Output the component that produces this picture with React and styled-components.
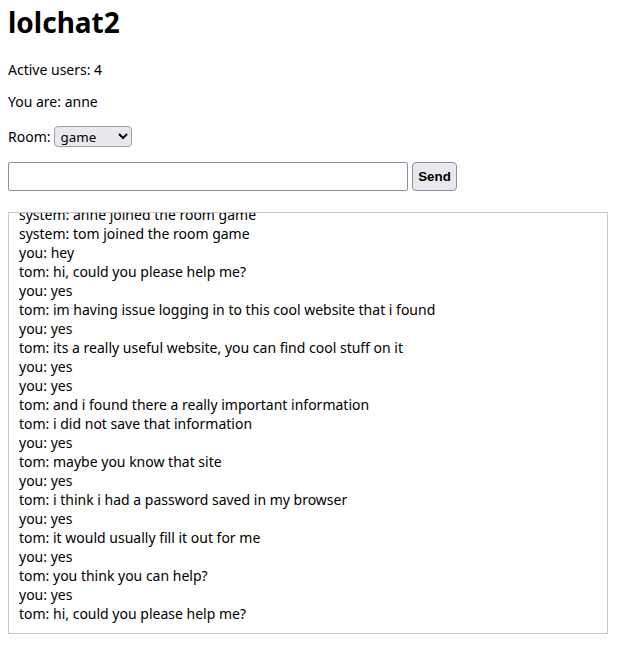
import React, { useState } from "react";
import styled, { createGlobalStyle } from "styled-components";

const GlobalStyle = createGlobalStyle`
  body {
    margin: 0;
    padding: 0 8px;
    font-family: "Noto Sans", sans-serif;
    font-size: 14px;
    color: #000;
    background: #fff;
  }
`;

const messages = [
  "system: you joined the room lobby",
  "system: anne joined the room game",
  "system: tom joined the room game",
  "you: hey",
  "tom: hi, could you please help me?",
  "you: yes",
  "tom: im having issue logging in to this cool website that i found",
  "you: yes",
  "tom: its a really useful website, you can find cool stuff on it",
  "you: yes",
  "you: yes",
  "tom: and i found there a really important information",
  "tom: i did not save that information",
  "you: yes",
  "tom: maybe you know that site",
  "you: yes",
  "tom: i think i had a password saved in my browser",
  "you: yes",
  "tom: it would usually fill it out for me",
  "you: yes",
  "tom: you think you can help?",
  "you: yes",
  "tom: hi, could you please help me?",
];

const App = () => {
  const [room, setRoom] = useState("game");
  const [text, setText] = useState("");

  return (
    <>
      <GlobalStyle />
      <Page>
        <Title>lolchat2</Title>
        <Info>Active users: 4</Info>
        <Info>You are: anne</Info>
        <RoomRow>
          Room:
          <RoomSelect value={room} onChange={(e) => setRoom(e.target.value)}>
            <option value="lobby">lobby</option>
            <option value="game">game</option>
            <option value="random">random</option>
          </RoomSelect>
        </RoomRow>
        <SendRow>
          <MessageInput
            type="text"
            value={text}
            onChange={(e) => setText(e.target.value)}
          />
          <SendBtn type="button">Send</SendBtn>
        </SendRow>
        <ChatBox>
          {messages.map((m, i) => (
            <Line key={i}>{m}</Line>
          ))}
        </ChatBox>
      </Page>
    </>
  );
};

export default App;

const Page = styled.div`
  display: flex;
  flex-direction: column;
  align-items: flex-start;
`;

const Title = styled.h1`
  margin: 0;
  font-size: 28px;
  font-weight: 700;
  line-height: 44px;
`;

const Info = styled.p`
  margin: 16px 0 0;
  line-height: 19px;
  & + & {
    margin-top: 13px;
  }
`;

const RoomRow = styled.div`
  display: flex;
  align-items: center;
  gap: 3px;
  margin-top: 15px;
  line-height: 19px;
`;

const RoomSelect = styled.select`
  width: 78px;
  height: 21px;
  font-family: "Noto Sans", sans-serif;
  font-size: 13.33px;
  border: 1px solid #a0a0aa;
  border-radius: 4px;
  background-color: #e9e9ed;
  padding: 0 2px;
`;

const SendRow = styled.div`
  display: flex;
  gap: 4px;
  margin-top: 15px;
`;

const MessageInput = styled.input`
  box-sizing: border-box;
  width: 400px;
  height: 29px;
  border: 1px solid #8f8f9d;
  border-radius: 2px;
  font-family: "Noto Sans", sans-serif;
  font-size: 14px;
`;

const SendBtn = styled.button`
  box-sizing: border-box;
  width: 45px;
  height: 29px;
  padding: 0;
  font-family: "Liberation Sans", Arial, sans-serif;
  font-weight: 700;
  font-size: 13.33px;
  border: 1px solid #8f8f9d;
  border-radius: 4px;
  background: #e9e9ed;
  color: #000;
`;

const ChatBox = styled.div`
  box-sizing: border-box;
  align-self: stretch;
  width: 600px;
  height: 422px;
  margin-top: 21px;
  padding: 10px;
  border: 1px solid #c8c8c8;
  display: flex;
  flex-direction: column;
  justify-content: flex-end;
  overflow: hidden;
`;

const Line = styled.div`
  flex-shrink: 0;
  line-height: 19px;
`;
